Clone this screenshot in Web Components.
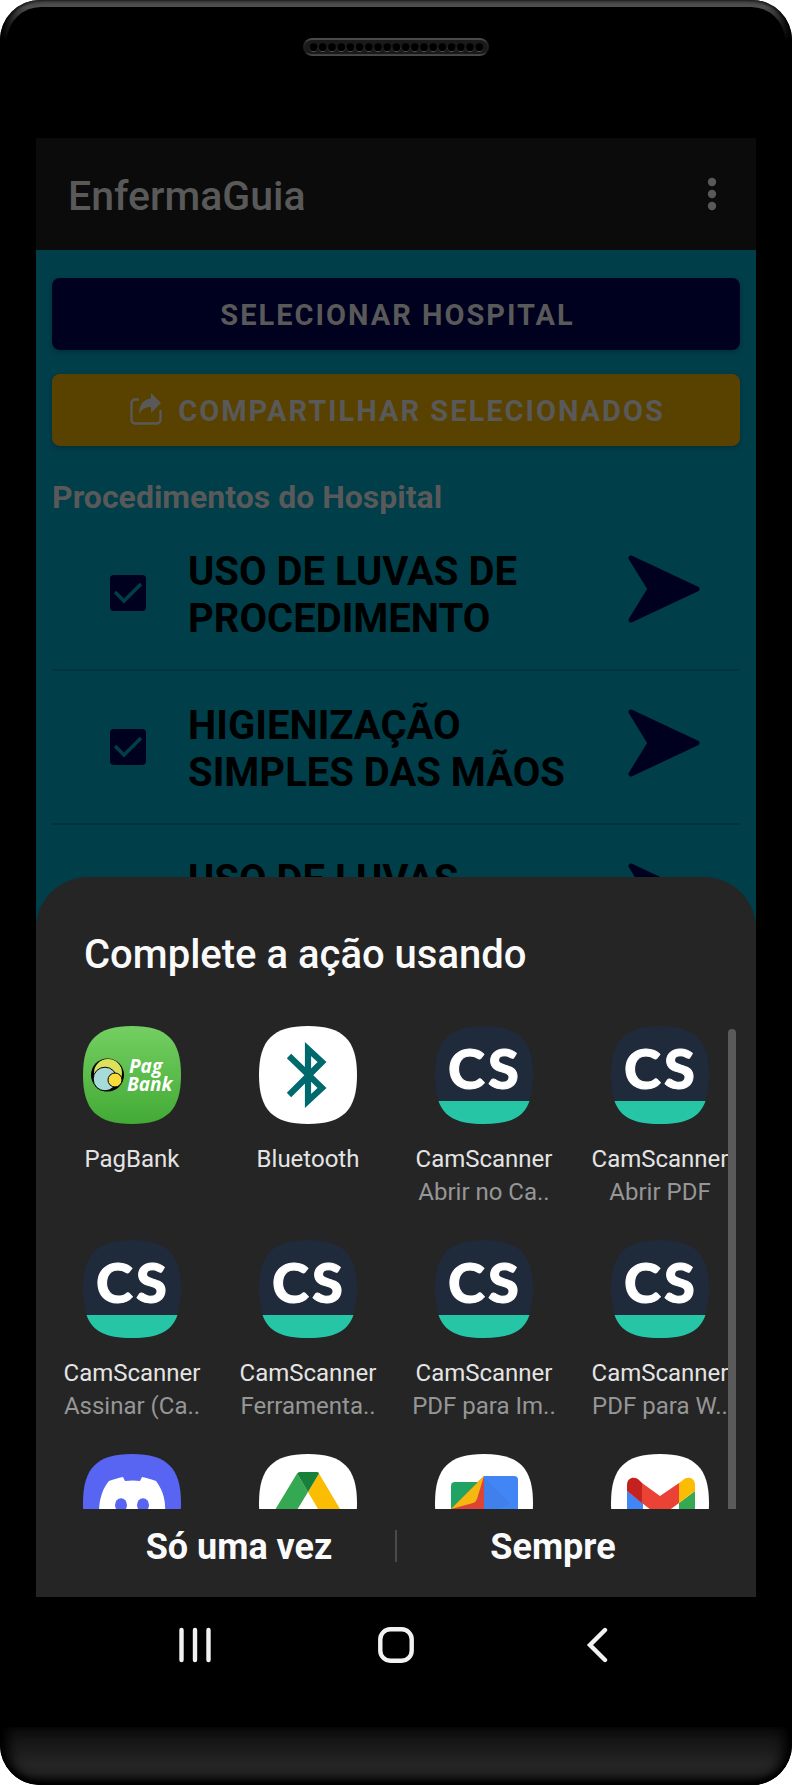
<!DOCTYPE html>
<html lang="pt-BR">
<head>
<meta charset="utf-8">
<meta name="viewport" content="width=device-width, initial-scale=1">
<title>EnfermaGuia</title>
<style>
  body { margin: 0; background: #fff; font-family: Roboto, "Liberation Sans", sans-serif; }
</style>
</head>
<body>
<phone-frame>
  <guide-app slot="app">
    <procedure-row>USO DE LUVAS DE PROCEDIMENTO</procedure-row>
    <procedure-row>HIGIENIZAÇÃO SIMPLES DAS MÃOS</procedure-row>
    <procedure-row>USO DE LUVAS</procedure-row>
  </guide-app>
  <share-sheet slot="app">
    <app-tile icon="pagbank" label="PagBank"></app-tile>
    <app-tile icon="bluetooth" label="Bluetooth"></app-tile>
    <app-tile icon="cs" label="CamScanner" note="Abrir no Ca.."></app-tile>
    <app-tile icon="cs" label="CamScanner" note="Abrir PDF"></app-tile>
    <app-tile icon="cs" label="CamScanner" note="Assinar (Ca.."></app-tile>
    <app-tile icon="cs" label="CamScanner" note="Ferramenta.."></app-tile>
    <app-tile icon="cs" label="CamScanner" note="PDF para Im.."></app-tile>
    <app-tile icon="cs" label="CamScanner" note="PDF para W.."></app-tile>
    <app-tile icon="discord"></app-tile>
    <app-tile icon="drive"></app-tile>
    <app-tile icon="files"></app-tile>
    <app-tile icon="gmail"></app-tile>
  </share-sheet>
  <nav-bar slot="nav"></nav-bar>
</phone-frame>

<script>
const define = (name, html, setup) => customElements.define(name, class extends HTMLElement {
  constructor() {
    super();
    const root = this.attachShadow({ mode: 'open' });
    const t = document.createElement('template');
    t.innerHTML = '<style>:host,*{box-sizing:border-box}button{font:inherit;color:inherit;border:0;background:none;padding:0;margin:0}</style>' + html;
    root.append(t.content.cloneNode(true));
    if (setup) setup(this, root);
  }
});

define('phone-frame', `
<style>
  :host { display: flex; flex-direction: column; background: #000; border-radius: 40px; overflow: hidden; }
  .top { position: relative; height: 138px; padding-top: 38px; display: flex; justify-content: center; align-items: flex-start;
    background: linear-gradient(#444, #505050 7px, #3a3a3a 14px, #1c1c1c 24px, #000 42px); }
  .top::before { content: ""; position: absolute; inset: 7px 7px 0; border-radius: 34px 34px 0 0; background: #000; }
  .top::after { content: ""; position: absolute; inset: 0; border-radius: 40px 40px 0 0; box-shadow: inset 4px 0 4px -1px #000, inset -4px 0 4px -1px #000; }
  .speaker { display: block; position: relative; width: 186px; height: 18px; }
  .screen { margin: 0 36px; display: grid; grid-template-rows: 739px auto; overflow: hidden; background: #003e4a; }
  .chin { height: 58px; background: linear-gradient(#0c0c0c, #252525 64%, #222 78%, #070707);
    border-radius: 0 0 40px 40px; box-shadow: inset 12px 0 12px -4px #000, inset -12px 0 12px -4px #000, inset 0 -3px 4px #000; }
</style>
<div class="top">
  <svg class="speaker" viewBox="0 0 186 18" aria-hidden="true">
    <defs>
      <linearGradient id="s" x2="0" y2="1"><stop stop-color="#4c4c4c"/><stop offset=".3" stop-color="#222"/><stop offset=".8" stop-color="#1c1c1c"/><stop offset="1" stop-color="#484848"/></linearGradient>
      <pattern id="h" x="6" width="9.2" height="18" patternUnits="userSpaceOnUse"><circle cx="4.6" cy="10" r="4" fill="#555"/><circle cx="4.6" cy="9.2" r="3.9" fill="#000"/></pattern>
    </defs>
    <rect x="1" y="1" width="184" height="16" rx="8" fill="#1a1a1a" stroke="url(#s)" stroke-width="2"/>
    <rect x="6" width="174" height="18" fill="url(#h)"/>
  </svg>
</div>
<div class="screen"><slot name="app"></slot></div>
<slot name="nav"></slot>
<div class="chin"></div>`);

define('guide-app', `
<style>
  :host { display: flex; flex-direction: column; min-height: 0; overflow: hidden; background: #003e4a; color: #595959; }
  header { flex: none; height: 112px; background: #0b0b0b; display: flex; align-items: center; justify-content: space-between; padding: 4px 24px 0 32px; }
  h1 { margin: 0; font-size: 41px; line-height: 48px; font-weight: 500; }
  .more { width: 40px; height: 48px; padding-bottom: 4px; }
  .more svg { display: block; margin: auto; }
  main { padding: 28px 16px 0; display: flex; flex-direction: column; }
  .btn { height: 72px; border-radius: 8px; font-size: 29px; font-weight: 700; letter-spacing: 2px; line-height: 32px;
    display: flex; align-items: center; justify-content: center; gap: 16px; margin-bottom: 24px; box-shadow: 0 2px 4px #00303a; padding: 2px 0 0 3px; }
  .btn svg { margin-bottom: 4px; }
  .navy { background: #00001f; }
  .gold { background: #594200; }
  h2 { margin: 7px 0 0; font-size: 32px; line-height: 40px; font-weight: 700; }
</style>
<header><h1>EnfermaGuia</h1>
  <button class="more" aria-label="Mais opções"><svg width="12" height="34" viewBox="0 0 12 34" fill="#595959"><circle cx="6" cy="5" r="4.2"/><circle cx="6" cy="17" r="4.2"/><circle cx="6" cy="29" r="4.2"/></svg></button>
</header>
<main>
  <button class="btn navy">SELECIONAR HOSPITAL</button>
  <button class="btn gold"><svg width="32" height="32" viewBox="0 0 32 32" aria-hidden="true"><path d="M9 6.500H5A3.500 3.500 0 0 0 1.500 10V27A3.500 3.500 0 0 0 5 30.500h22a3.500 3.500 0 0 0 3.500-3.500V17" fill="none" stroke="#595959" stroke-width="2.400"/><path d="M21 0l10 10-10 10v-6c-6 0-9 2-12 7 0-9 4-14.500 12-15.500z" fill="#595959"/></svg>COMPARTILHAR SELECIONADOS</button>
  <h2>Procedimentos do Hospital</h2>
  <slot></slot>
</main>`);

define('procedure-row', `
<style>
  :host { display: flex; align-items: flex-start; height: 154px; border-bottom: 2px solid #003540; padding: 31px 40px 0 58px; color: #000; }
  label { flex: 1; display: flex; gap: 42px; font-size: 40px; line-height: 47px; font-weight: 700; }
  input { appearance: none; flex: none; width: 36px; height: 36px; margin: 27px 0 0; border-radius: 4px;
    background: #00001f url("data:image/svg+xml,%3Csvg xmlns='http://www.w3.org/2000/svg' viewBox='0 0 36 36'%3E%3Cpath d='M5 17l9 9L31 9' fill='none' stroke='%23003e4a' stroke-width='3.500'/%3E%3C/svg%3E"); }
  span { flex: 1; }
  button { flex: none; margin-top: 7px; }
  svg { display: block; }
</style>
<label><input type="checkbox" checked><span><slot></slot></span></label>
<button aria-label="Abrir procedimento"><svg width="72" height="68" viewBox="0 0 72 68"><path d="M3 3L69 34 3 65 22 34z" fill="#00001f" stroke="#00001f" stroke-width="5" stroke-linejoin="round"/></svg></button>`);

define('share-sheet', `
<style>
  :host { display: block; position: relative; z-index: 1; background: #252525; color: #fafafa; border-radius: 52px 52px 0 0; }
  h2 { margin: 0; padding: 54px 48px 0; font-size: 40px; line-height: 48px; font-weight: 500; }
  .scroll { margin-top: 47px; height: 483px; overflow: hidden; display: flex; padding: 0 20px 0 8px; }
  .grid { flex: 1; display: grid; grid-template-columns: repeat(4, 176px); grid-auto-rows: 214px; }
  .bar { flex: none; width: 8px; margin: 3px 0 0 -20px; border-radius: 4px 4px 0 0; background: #5a5a5a; position: relative; }
  .actions { display: flex; align-items: center; height: 88px; font-size: 36px; font-weight: 700; line-height: 44px; padding: 0 47px 14px; }
  .actions button { flex: 1; padding-top: 2px; }
  i { width: 2px; height: 32px; background: #4a4a4a; }
</style>
<h2>Complete a ação usando</h2>
<div class="scroll"><div class="grid"><slot></slot></div><div class="bar"></div></div>
<div class="actions"><button>Só uma vez</button><i></i><button>Sempre</button></div>`);

const SQ = 'M49 0C84 0 98 14 98 49S84 98 49 98 0 84 0 49 14 0 49 0z';
const ICONS = {
  pagbank: `<defs><linearGradient id="g" x2="0" y2="1"><stop stop-color="#74cf62"/><stop offset="1" stop-color="#43aa35"/></linearGradient></defs>
    <path d="${SQ}" fill="url(#g)"/><circle cx="24.500" cy="49" r="16.500" fill="#000"/><circle cx="25" cy="47" r="14" fill="#dbe15c"/><circle cx="22" cy="53" r="11.800" fill="#a7dbd9" stroke="#000"/><circle cx="32" cy="54" r="7" fill="#f8dc3a" stroke="#000"/>
    <g fill="#fff" font-family="Open Sans, sans-serif" font-weight="700" font-style="italic" font-size="19"><text x="46" y="46.500">Pag</text><text x="44" y="64.500">Bank</text></g>`,
  bluetooth: `<path d="${SQ}" fill="#fff"/><path d="M30 30l33 32-14 13V23l14 13-33 33" fill="none" stroke="#00696d" stroke-width="6.200"/>`,
  cs: `<path d="${SQ}" fill="#1f2a3a"/><path d="M3.500 75h91C89 91 76 98 49 98S9 91 3.500 75z" fill="#25c5a6"/>
    <text x="13 53" y="63" fill="#fff" stroke="#fff" font-family="Lato, sans-serif" font-weight="900" font-size="56">CS</text>`,
  discord: `<path d="${SQ}" fill="#5865f2"/><path d="M16 58C16 45 20 34 26 27c5-2 9-3 14-4l2 4q8-1 15 0l2-4c5 1 9 2 14 4 6 8 10 18 9 31z" fill="#fff"/><ellipse cx="38" cy="51" rx="6" ry="6.800" fill="#5865f2"/><ellipse cx="60" cy="51" rx="6" ry="6.800" fill="#5865f2"/>`,
  drive: `<path d="${SQ}" fill="#fff"/><path d="M38 19.500L16 56l11 18 22-36z" fill="#34a853"/><path d="M60 19.500L84 60H62L49 38z" fill="#fbbc04"/><path d="M38 19.500q1-1.500 3-1.500h17q2 0 2 1.500L49 38z" fill="#188038"/>`,
  files: `<path d="${SQ}" fill="#fff"/><path d="M16 60V32a4 4 0 0 1 4-4h24v32z" fill="#1fa463"/><path d="M49 60V22h30a4 4 0 0 1 4 4v34z" fill="#4285f4"/><path d="M49 23L76 50l-27 10z" fill="#3f80ec"/><path d="M16 55L49 22v34l-6 4H18z" fill="#db4437"/><path d="M16 55L49 22 42 45q-1 3-4 4z" fill="#f4b80f"/>`,
  gmail: `<path d="${SQ}" fill="#fff"/><path d="M16 37l16 12v30H16z" fill="#4285f4"/><path d="M84 37L68 49v30h16z" fill="#34a853"/><path d="M31 29l18 13 19-13v20L49 63 31 49z" fill="#ea4335"/><path d="M16 37v-6c0-8 8-9 12-5l3 3v20z" fill="#c5221f"/><path d="M84 37v-6c0-8-8-9-12-5l-4 3v20z" fill="#fbbc04"/>`
};
define('app-tile', `
<style>
  :host { display: block; }
  button { display: flex; flex-direction: column; align-items: center; width: 100%; font-size: 24px; line-height: 33px; white-space: nowrap; color: #e4e4e4; }
  svg { display: block; width: 98px; height: 98px; margin-bottom: 19px; }
  small { font-size: 24px; color: #969696; }
</style>
<button><svg viewBox="0 0 98 98" aria-hidden="true"></svg><span></span><small></small></button>`, (el, root) => {
  root.querySelector('svg').innerHTML = ICONS[el.getAttribute('icon')];
  const label = el.getAttribute('label');
  if (label) root.querySelector('span').textContent = label;
  else root.querySelector('button').setAttribute('aria-label', el.getAttribute('icon'));
  root.querySelector('small').textContent = el.getAttribute('note') || '';
});

define('nav-bar', `
<style>
  :host { display: flex; justify-content: space-around; height: 130px; padding: 30px 95px 0; }
  button { width: 36px; height: 36px; }
  svg { display: block; }
</style>
<button aria-label="Recentes"><svg width="36" height="36" viewBox="0 0 36 36"><path d="M4.500 3v30M18 3v30M31.500 3v30" stroke="#f2f2f2" stroke-width="4.400" stroke-linecap="round"/></svg></button>
<button aria-label="Início"><svg width="36" height="36" viewBox="0 0 36 36"><rect x="2.300" y="2.300" width="31.400" height="31.400" rx="10" fill="none" stroke="#f2f2f2" stroke-width="4.400"/></svg></button>
<button aria-label="Voltar"><svg width="36" height="36" viewBox="0 0 36 36"><path d="M26 3L11 18l15 15" fill="none" stroke="#f2f2f2" stroke-width="4.400" stroke-linecap="round"/></svg></button>`);
</script>
</body>
</html>
